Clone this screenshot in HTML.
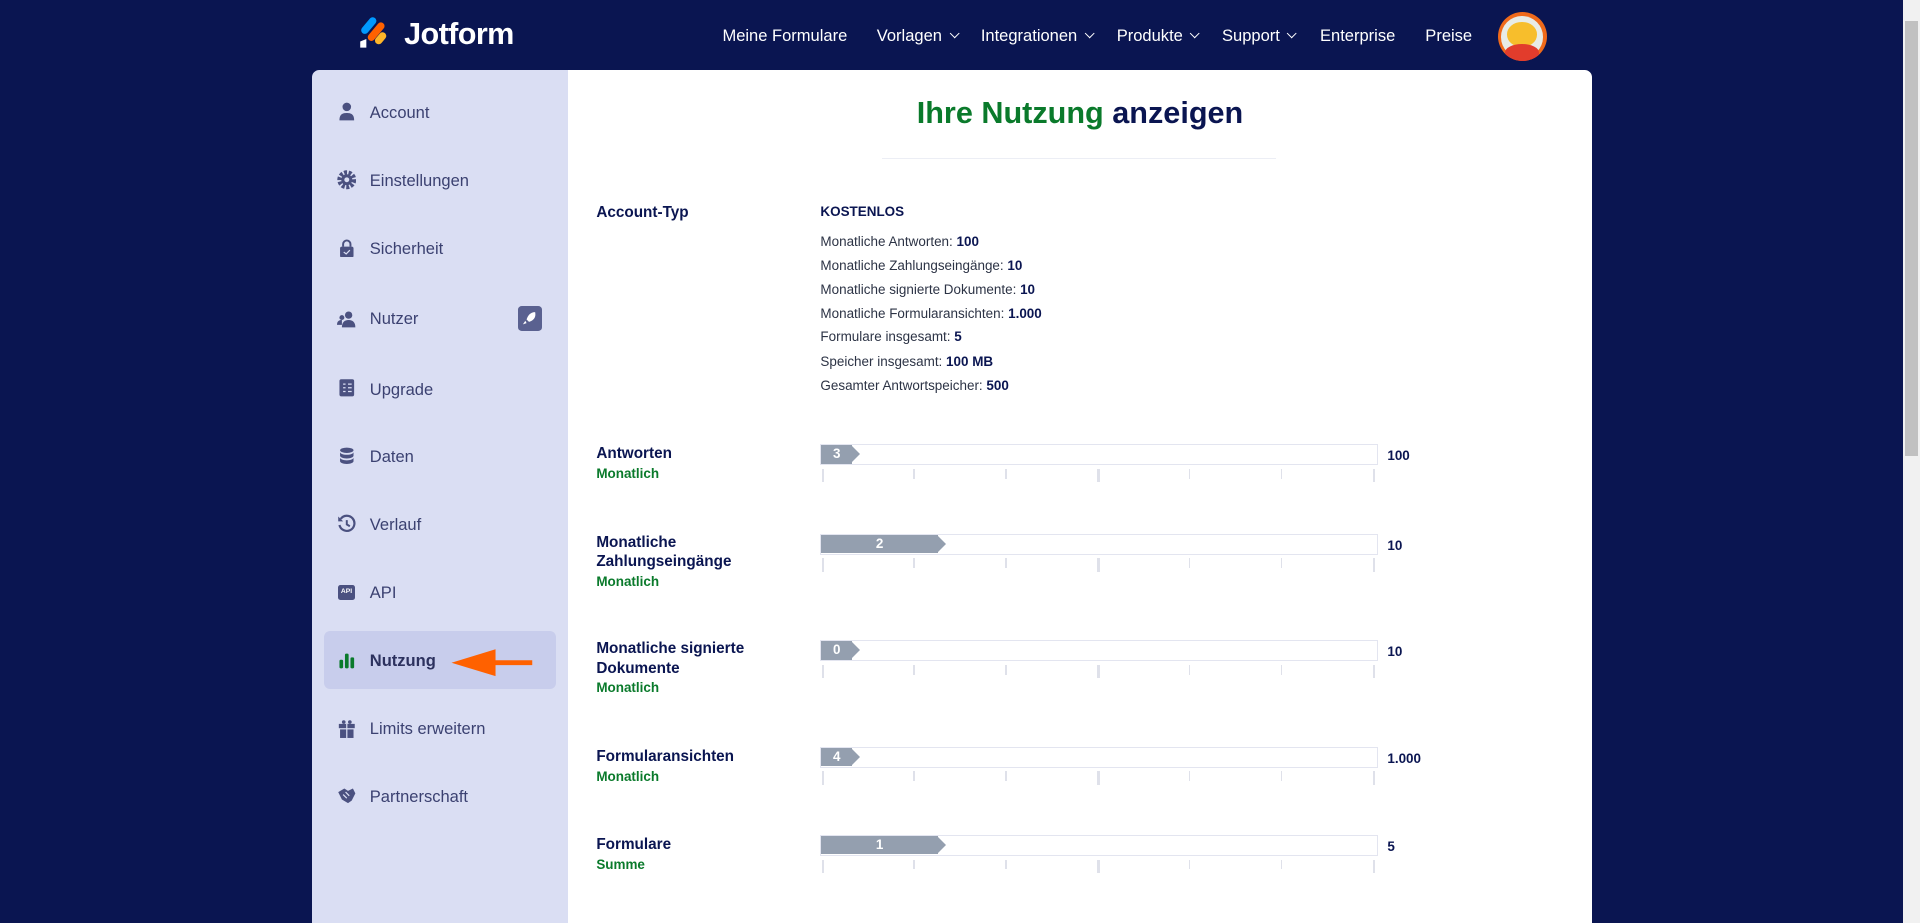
<!DOCTYPE html>
<html><head><meta charset="utf-8"><style>
*{margin:0;padding:0;box-sizing:border-box}
html,body{width:1920px;height:923px;overflow:hidden;background:#0a1551}
#w{zoom:1.22449;width:1568px;height:754px;position:relative;font-family:"Liberation Sans",Arial,sans-serif;color:#0a1551}
.a{position:absolute}
.nav{color:#fff;font-size:13.5px;top:21px;white-space:nowrap}
.nav .c{display:inline-block;width:6px;height:6px;border-right:1.6px solid #fff;border-bottom:1.6px solid #fff;transform:rotate(45deg);margin-left:7px;position:relative;top:-3px}
#side{left:255px;top:57px;width:209px;height:697px;background:#dadef3;border-top-left-radius:6px}
#main{left:464px;top:57px;width:836px;height:697px;background:#fff;border-top-right-radius:6px}
.si{position:absolute;left:47px;font-size:13.5px;color:#3b4171}
.ic{position:absolute;left:20px;width:16px;height:16px}
.lab{font-size:12.5px;font-weight:bold;color:#0a1551;line-height:16px}
.g{color:#0a7a2b;font-size:11px;font-weight:bold}
.ln{font-size:11px;color:#2c3345;left:670px}
.ln b{color:#0a1551}
.bar{left:670px;width:455px;height:17px;border:1px solid #e3e5f0;background:#fff}
.fill{position:absolute;left:0;top:0;height:15px;background:#949faf;color:#fff;font-size:11px;font-weight:bold;line-height:15px}
.val{left:1133px;font-size:11px;font-weight:bold}
.tk{position:absolute;width:1px;background:#dfe1ea}
</style></head><body><div id="w">
<svg class="a" style="left:293px;top:14px" width="26" height="26" viewBox="0 0 26 26">
<rect x="5" y="-1" width="6" height="16" rx="3" fill="#0099ff" transform="rotate(40 8 7)"/>
<rect x="11" y="3" width="6" height="18" rx="3" fill="#ff6100" transform="rotate(40 14 12)"/>
<rect x="15" y="12" width="6" height="11" rx="3" fill="#ffb629" transform="rotate(40 18 17)"/>
<path d="M1 20 L6 18 L6 25 L1 25Z" fill="#fff"/>
</svg>
<div class="a" style="left:330px;top:14px;color:#fff;font-size:25px;font-weight:bold;letter-spacing:-0.5px">Jotform</div>
<div class="a nav" style="left:590px">Meine Formulare</div>
<div class="a nav" style="left:716px">Vorlagen<span class="c"></span></div>
<div class="a nav" style="left:801px">Integrationen<span class="c"></span></div>
<div class="a nav" style="left:912px">Produkte<span class="c"></span></div>
<div class="a nav" style="left:998px">Support<span class="c"></span></div>
<div class="a nav" style="left:1078px">Enterprise</div>
<div class="a nav" style="left:1164px">Preise</div>
<div class="a" style="left:1223px;top:10px;width:40px;height:40px;border-radius:50%;background:#f06a1a;overflow:hidden">
<div class="a" style="left:3px;top:3px;width:34px;height:34px;border-radius:50%;background:#e8ece6"></div>
<div class="a" style="left:8px;top:8px;width:24px;height:20px;border-radius:50%;background:#f7be2c"></div>
<div class="a" style="left:6px;top:26px;width:28px;height:14px;border-radius:50% 50% 0 0;background:#e23c2c"></div>
</div>
<div class="a" style="left:1554px;top:0;width:14px;height:754px;background:#f1f1f1"></div>
<div class="a" style="left:1556px;top:17px;width:10px;height:355px;background:#c1c1c1"></div>

<div class="a" id="side">
<div class="a" style="left:10px;top:458px;width:189px;height:48px;background:#c8cdec;border-radius:5px"></div>
<svg class="ic" style="top:26px" viewBox="0 0 16 16"><circle cx="8" cy="4" r="3.5" fill="#4b5180"/><path d="M2 15c0-5 2.5-6 6-6s6 1 6 6z" fill="#4b5180"/></svg>
<div class="si" style="top:27px">Account</div>
<svg class="ic" style="top:82px" viewBox="0 0 16 16"><circle cx="8" cy="8" r="6" fill="none" stroke="#4b5180" stroke-width="3.5" stroke-dasharray="2.4 1.3"/><circle cx="8" cy="8" r="4.5" fill="#4b5180"/><circle cx="8" cy="8" r="2" fill="#dadef3"/></svg>
<div class="si" style="top:83px">Einstellungen</div>
<svg class="ic" style="top:137px" viewBox="0 0 16 16"><path d="M5 7V5a3 3 0 016 0v2" stroke="#4b5180" stroke-width="1.6" fill="none"/><rect x="2.5" y="7" width="11" height="9" rx="1.5" fill="#4b5180"/><path d="M5.5 11.5l2 1.5 3-3" stroke="#dadef3" fill="none"/></svg>
<div class="si" style="top:138px">Sicherheit</div>
<svg class="ic" style="top:195px" viewBox="0 0 16 16"><circle cx="9.5" cy="5" r="3" fill="#4b5180"/><path d="M4 15c0-4 2-6 5.5-6s5.5 2 5.5 6z" fill="#4b5180"/><circle cx="4" cy="7" r="2" fill="#4b5180"/><path d="M0 13c0-3 1.5-4 4-4v4z" fill="#4b5180"/></svg>
<div class="si" style="top:195px">Nutzer</div>
<div class="a" style="left:168px;top:193px;width:20px;height:20px;border-radius:3px;background:#5a6190"><svg width="20" height="20" viewBox="0 0 20 20"><path d="M14 5c-4 0-6 3-7 6l2 2c3-1 6-3 5-8zM6 12l-2 3 3-1z" fill="#fff"/></svg></div>
<svg class="ic" style="top:252px" viewBox="0 0 16 16"><rect x="2" y="1" width="12" height="14" rx="1.5" fill="#4b5180"/><path d="M5 5h2M9 5h3M5 8h2M9 8h3M5 11h2M9 11h3" stroke="#dadef3"/></svg>
<div class="si" style="top:253px">Upgrade</div>
<svg class="ic" style="top:307px" viewBox="0 0 16 16"><ellipse cx="8" cy="3.5" rx="5.5" ry="2.2" fill="#4b5180"/><path d="M2.5 5v3c0 1.2 2.5 2.2 5.5 2.2s5.5-1 5.5-2.2V5c0 1.2-2.5 2.2-5.5 2.2S2.5 6.2 2.5 5zM2.5 9.5v3c0 1.2 2.5 2.2 5.5 2.2s5.5-1 5.5-2.2v-3c0 1.2-2.5 2.2-5.5 2.2S2.5 10.7 2.5 9.5z" fill="#4b5180"/></svg>
<div class="si" style="top:308px">Daten</div>
<svg class="ic" style="top:363px" viewBox="0 0 16 16"><path d="M3 4A6.2 6.2 0 1 1 2 9" fill="none" stroke="#4b5180" stroke-width="1.8"/><path d="M1 2v4h4z" fill="#4b5180"/><path d="M8 5v3.5l2.5 1.5" stroke="#4b5180" stroke-width="1.6" fill="none"/></svg>
<div class="si" style="top:364px">Verlauf</div>
<div class="a" style="left:21px;top:421px;width:14px;height:12px;background:#4b5180;border-radius:2px;color:#fff;font-size:5.5px;font-weight:bold;text-align:center;line-height:12px">API</div>
<div class="si" style="top:419px">API</div>
<svg class="ic" style="top:474px" viewBox="0 0 16 16"><rect x="2" y="8" width="3" height="7" rx="1" fill="#0a7a2b"/><rect x="6.5" y="3" width="3" height="12" rx="1" fill="#0a7a2b"/><rect x="11" y="6" width="3" height="9" rx="1" fill="#0a7a2b"/></svg>
<div class="si" style="top:475px;font-weight:bold;color:#2c315e">Nutzung</div>
<svg class="a" style="left:112px;top:472px" width="70" height="24" viewBox="0 0 70 24"><path d="M68 12H32" stroke="#ff6100" stroke-width="4"/><path d="M2 12L38 1v22z" fill="#ff6100"/></svg>
<svg class="ic" style="top:530px" viewBox="0 0 16 16"><rect x="1.5" y="4" width="13" height="3.5" fill="#4b5180"/><rect x="2.5" y="8.5" width="11" height="7" fill="#4b5180"/><path d="M8 4V16" stroke="#dadef3"/><circle cx="5.5" cy="2.5" r="1.5" fill="#4b5180"/><circle cx="10.5" cy="2.5" r="1.5" fill="#4b5180"/></svg>
<div class="si" style="top:530px">Limits erweitern</div>
<svg class="ic" style="top:585px" viewBox="0 0 16 16"><path d="M1 5l5-3 3 2 4-2 2 4-3 6-3 2-5-3z" fill="#4b5180"/><path d="M5 7l3 3M7 5l3 3" stroke="#dadef3"/></svg>
<div class="si" style="top:586px">Partnerschaft</div>
</div>

<div class="a" id="main"></div>
<div class="a" style="left:464px;width:836px;top:78px;text-align:center;font-size:25px;font-weight:bold;color:#0a1551">
<span style="color:#0a7a2b">Ihre Nutzung</span> anzeigen</div>
<div class="a" style="left:720px;top:129px;width:322px;height:1px;background:#eceef5"></div>

<div class="a lab" style="left:487px;top:166px">Account-Typ</div>
<div class="a" style="left:670px;top:167px;font-size:11px;font-weight:bold">KOSTENLOS</div>
<div class="a ln" style="top:191px">Monatliche Antworten: <b>100</b></div>
<div class="a ln" style="top:211px">Monatliche Zahlungseingänge: <b>10</b></div>
<div class="a ln" style="top:230px">Monatliche signierte Dokumente: <b>10</b></div>
<div class="a ln" style="top:250px">Monatliche Formularansichten: <b>1.000</b></div>
<div class="a ln" style="top:269px">Formulare insgesamt: <b>5</b></div>
<div class="a ln" style="top:289px">Speicher insgesamt: <b>100 MB</b></div>
<div class="a ln" style="top:309px">Gesamter Antwortspeicher: <b>500</b></div>

<div class="a lab" style="left:487px;top:363px">Antworten<br><span class="g">Monatlich</span></div>
<div class="a lab" style="left:487px;top:435px">Monatliche<br>Zahlungseingänge<br><span class="g">Monatlich</span></div>
<div class="a lab" style="left:487px;top:522px">Monatliche signierte<br>Dokumente<br><span class="g">Monatlich</span></div>
<div class="a lab" style="left:487px;top:610px">Formularansichten<br><span class="g">Monatlich</span></div>
<div class="a lab" style="left:487px;top:682px">Formulare<br><span class="g">Summe</span></div>

<div id="bars"></div>
<script>
var rows=[[363,"3",33,"100"],[436,"2",103,"10"],[523,"0",33,"10"],[610,"4",33,"1.000"],[682,"1",103,"5"]];
var h="";
rows.forEach(function(r){
 var y=r[0],w=r[2];
 h+='<div class="a bar" style="top:'+y+'px"><div class="fill" style="width:'+(w-8)+'px;text-align:center">'+r[1]+'</div><div style="position:absolute;left:'+(w-9)+'px;top:0;width:0;height:0;border-top:7.5px solid transparent;border-bottom:7.5px solid transparent;border-left:8px solid #949faf"></div></div>';
 h+='<div class="a val" style="top:'+(y+3)+'px">'+r[3]+'</div>';
 for(var i=0;i<7;i++){var big=(i%3==0);h+='<div class="tk a" style="left:'+(671+75*i)+'px;top:'+(y+20)+'px;height:'+(big?11:8)+'px;'+(big?'width:2px;':'')+'"></div>';}
});
document.getElementById("bars").innerHTML=h;
</script>
</div></body></html>
